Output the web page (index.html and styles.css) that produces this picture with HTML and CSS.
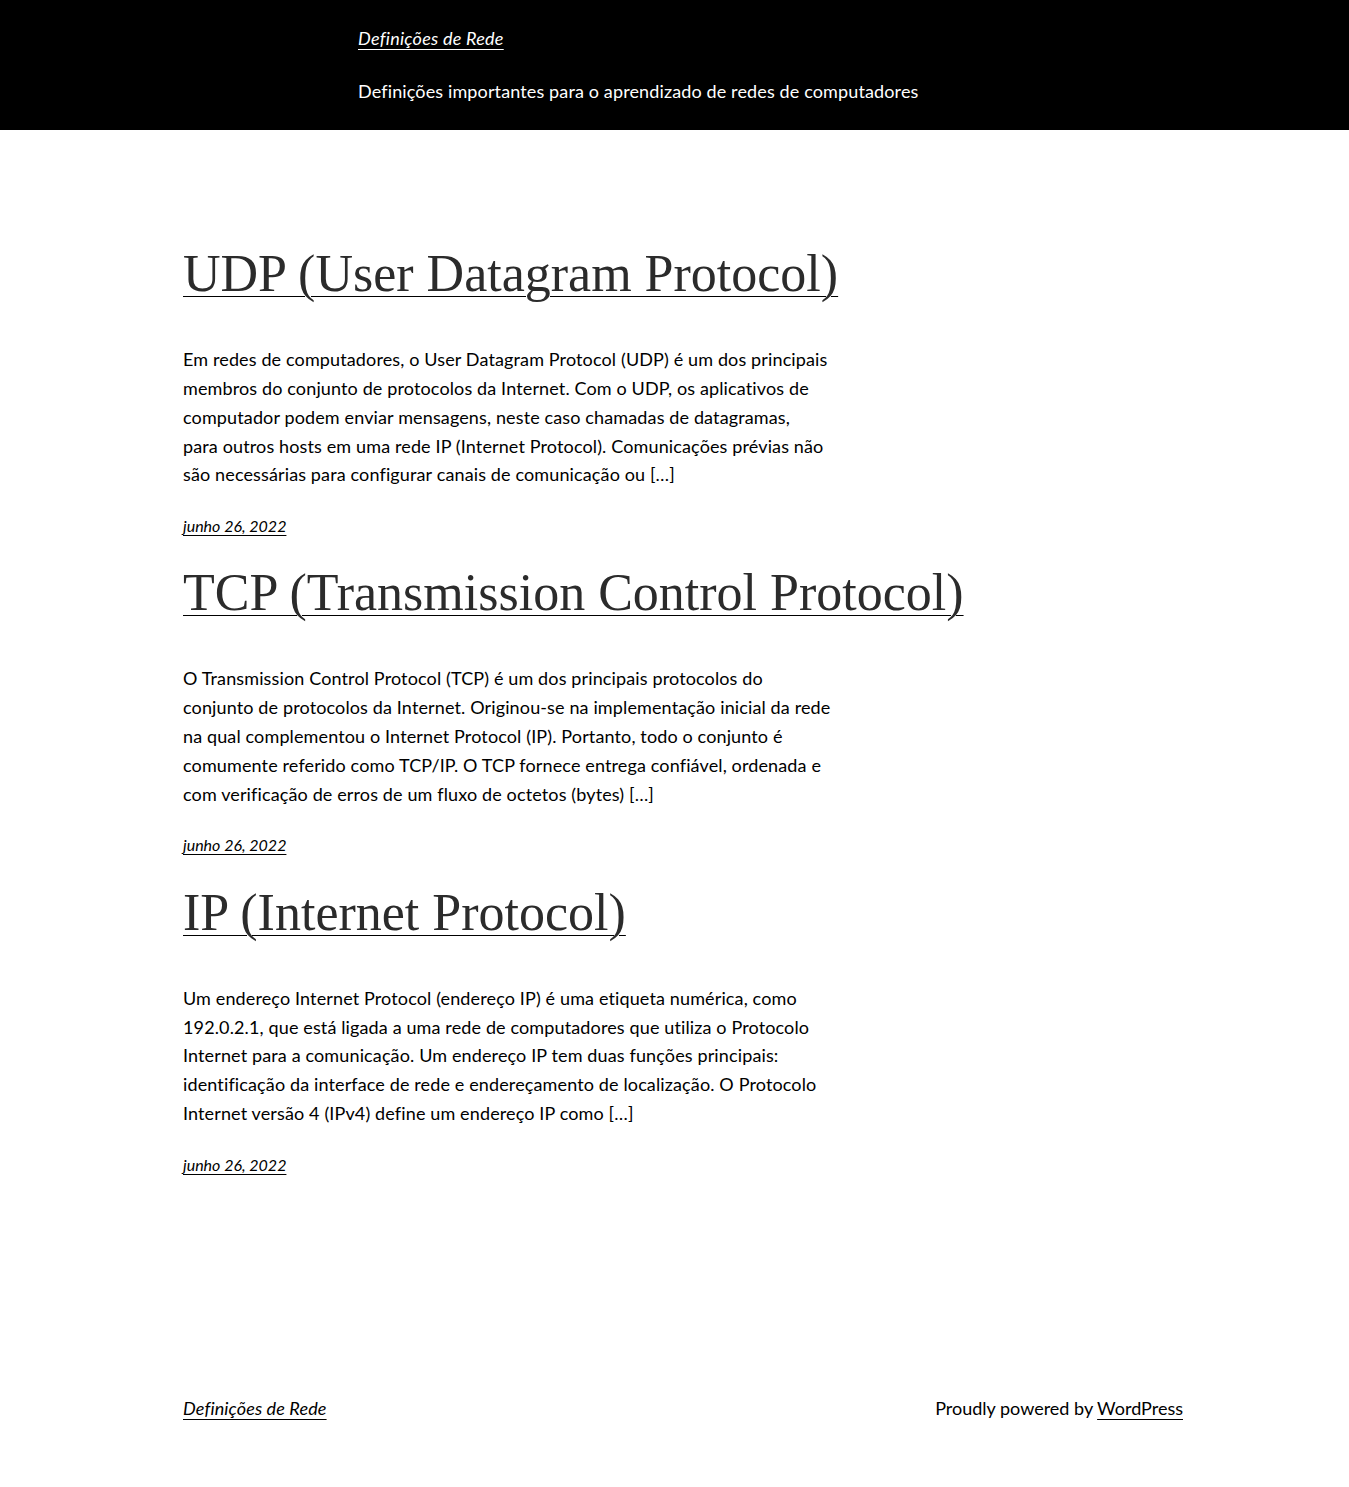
FILE: index.html
```html
<!DOCTYPE html>
<html lang="pt-BR">
<head>
<meta charset="utf-8">
<title>Definições de Rede</title>
<link rel="stylesheet" href="styles.css">
</head>
<body>
<header class="site-header">
  <div class="header-inner">
    <p class="site-title"><a href="#">Definições de Rede</a></p>
    <p class="tagline">Definições importantes para o aprendizado de redes de computadores</p>
  </div>
</header>

<main class="posts">
  <article class="post">
    <h2 class="post-title"><a href="#">UDP (User Datagram Protocol)</a></h2>
    <p class="excerpt">Em redes de computadores, o User Datagram Protocol (UDP) é um dos principais<br>membros do conjunto de protocolos da Internet. Com o UDP, os aplicativos de<br>computador podem enviar mensagens, neste caso chamadas de datagramas,<br>para outros hosts em uma rede IP (Internet Protocol). Comunicações prévias não<br>são necessárias para configurar canais de comunicação ou […]</p>
    <div class="post-date"><a href="#">junho 26, 2022</a></div>
  </article>
  <article class="post">
    <h2 class="post-title"><a href="#">TCP (Transmission Control Protocol)</a></h2>
    <p class="excerpt">O Transmission Control Protocol (TCP) é um dos principais protocolos do<br>conjunto de protocolos da Internet. Originou-se na implementação inicial da rede<br>na qual complementou o Internet Protocol (IP). Portanto, todo o conjunto é<br>comumente referido como TCP/IP. O TCP fornece entrega confiável, ordenada e<br>com verificação de erros de um fluxo de octetos (bytes) […]</p>
    <div class="post-date"><a href="#">junho 26, 2022</a></div>
  </article>
  <article class="post">
    <h2 class="post-title"><a href="#">IP (Internet Protocol)</a></h2>
    <p class="excerpt">Um endereço Internet Protocol (endereço IP) é uma etiqueta numérica, como<br>192.0.2.1, que está ligada a uma rede de computadores que utiliza o Protocolo<br>Internet para a comunicação. Um endereço IP tem duas funções principais:<br>identificação da interface de rede e endereçamento de localização. O Protocolo<br>Internet versão 4 (IPv4) define um endereço IP como […]</p>
    <div class="post-date"><a href="#">junho 26, 2022</a></div>
  </article>
</main>

<footer class="site-footer">
  <p class="footer-title"><a href="#">Definições de Rede</a></p>
  <p class="credit">Proudly powered by <a href="#">WordPress</a></p>
</footer>
</body>
</html>
```

FILE: styles.css
```css
html, body {
  margin: 0;
  padding: 0;
}

body {
  background: #fff;
  color: #000;
  font-family: Lato, "Open Sans", sans-serif;
  font-size: 18px;
  line-height: 1.6;
  letter-spacing: 0.13px;
}

a {
  color: inherit;
  text-decoration: underline;
  text-decoration-thickness: 1px;
  text-underline-offset: 0.2em;
}

p {
  margin: 0;
}

.site-header {
  background: #000;
  color: #fff;
  padding: 25px 0 25px;
}

.header-inner {
  margin-left: 358px;
  display: flex;
  flex-direction: column;
  gap: 26px;
  line-height: 27px;
}

.site-title {
  font-style: italic;
  letter-spacing: 0.25px;
}

.posts {
  margin: 0 166px 0 183px;
  padding-top: 115px;
}

.post {
  display: flex;
  flex-direction: column;
}

.post + .post {
  margin-top: 25.5px;
}

.post-title {
  margin: 0;
  font-family: "Liberation Serif", serif;
  font-weight: 300;
  font-size: 52px;
  line-height: 1.1;
  letter-spacing: 0;
  color: #2b2b2b;
}

.post-title a {
  text-underline-offset: 0.09em;
  text-decoration-color: #000;
}

.excerpt {
  max-width: 680px;
  margin-top: 43px;
  white-space: nowrap;
}

.post-date {
  margin-top: 24px;
  font-size: 16px;
  font-style: italic;
  line-height: 25.6px;
  letter-spacing: 0;
}

.site-footer {
  margin: 0 166px 0 183px;
  padding: 218px 0 65px;
  display: flex;
  justify-content: space-between;
  line-height: 27px;
}

.footer-title {
  font-style: italic;
}

.credit {
  letter-spacing: 0;
}
```
